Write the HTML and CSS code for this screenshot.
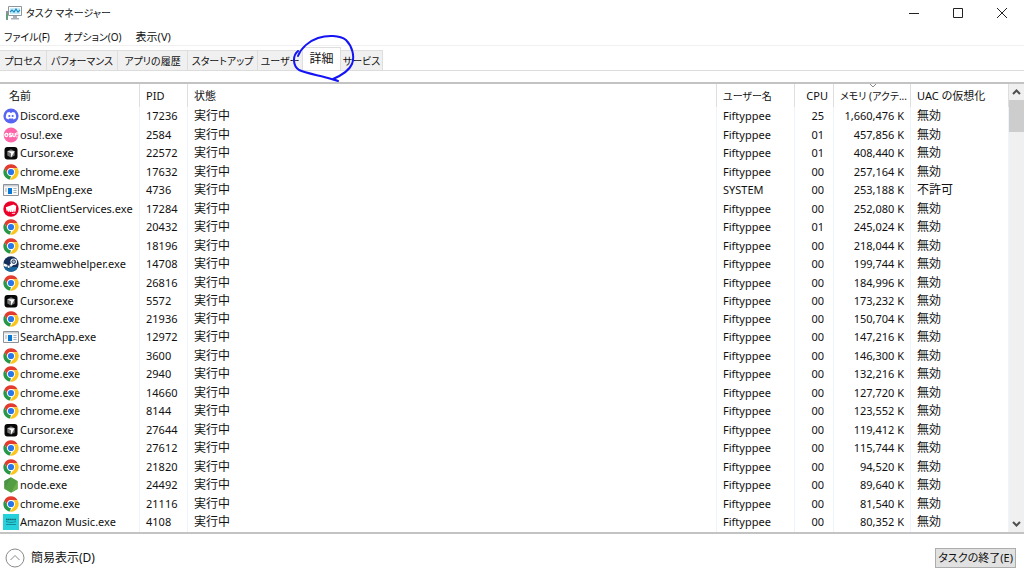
FILE: index.html
```html
<!DOCTYPE html>
<html lang="ja">
<head>
<meta charset="utf-8">
<title>タスク マネージャー</title>
<link rel="stylesheet" href="styles.css">
</head>
<body>
<svg class="defs" aria-hidden="true">
  <symbol id="discord" viewBox="0 0 16 16"><circle cx="8" cy="8" r="7.6" fill="#5865f2"/><path d="M4.300 4.600 6.600 4 7 4.800h2L9.400 4l2.300.6c1.100 1.600 1.600 3.400 1.400 5.500-.7.7-1.500 1.100-2.500 1.400l-.6-1.100H6l-.6 1.100c-1-.3-1.800-.7-2.500-1.400-.2-2.100.3-3.900 1.400-5.500z" fill="#fff"/><circle cx="6.300" cy="8" r="1.100" fill="#5865f2"/><circle cx="9.700" cy="8" r="1.100" fill="#5865f2"/></symbol>
  <symbol id="osu" viewBox="0 0 16 16"><circle cx="8" cy="8" r="7.400" fill="#ff66aa"/><g fill="none" stroke="#fff" stroke-width="1.300"><circle cx="3.400" cy="8" r="1.500"/><path d="M8.500 6.400H7.100c-1 0-1 1.500 0 1.600h.6c1.100 0 1.100 1.700 0 1.700H6.100M9.800 6v2.300c0 1.800 2.500 1.800 2.500 0V6M14 5v3.300M14 9.200v1.200"/></g></symbol>
  <symbol id="cursor" viewBox="0 0 16 16"><rect x="1.500" y="2" width="13" height="12.500" rx="3" fill="#080808"/><path d="m8 4.200 3.700 2v4.200L8 12.500l-3.700-2.100V6.200z" fill="#777"/><path d="M4.300 6.200h7.400L8 12.500V8.300z" fill="#fff"/></symbol>
  <symbol id="chrome" viewBox="0 0 16 16"><circle cx="8" cy="8" r="7.600" fill="#fff"/><path d="M1.400 4.200A7.600 7.600 0 0 1 14.600 4.200H8A3.800 3.800 0 0 0 4.700 9.900z" fill="#e33b2e"/><path d="M1.400 4.200 4.700 9.900A3.800 3.800 0 0 0 8 11.800l-.9 3.800A7.600 7.600 0 0 1 1.400 4.200z" fill="#279847"/><path d="M14.600 4.200A7.600 7.600 0 0 1 7.100 15.600l4.200-5.700A3.800 3.800 0 0 0 8 4.200z" fill="#fcc51c"/><circle cx="8" cy="8" r="3.900" fill="#fff"/><circle cx="8" cy="8" r="3.100" fill="#2878eb"/></symbol>
  <symbol id="window" viewBox="0 0 16 16"><path d="M.5 2.500h15v11H.5z" fill="#f8f8f8" stroke="#8b9298"/><path d="M1 3h14v1.500H1z" fill="#c8cdd1"/><path d="M5 6h4v6H5z" fill="#0878d4"/><path d="M2 7h2M2 9h2M10.500 6.500h3M10.500 8.500h3M10.500 10.500h3" stroke="#a2b2bd"/></symbol>
  <symbol id="riot" viewBox="0 0 16 16"><circle cx="8" cy="8" r="7.700" fill="#eb0029"/><path d="m2.800 6.300 7.700-2.800 2.700 1.500-.5 5.500-1.600.2V8.200l-.6 2.700H9.100l-.3-2.300-.2 2.300H7.100l-.5-2.100v2H5L4.400 8.600v2L3.600 10z" fill="#fff"/><path d="m8.500 12 3.700-.2-.2 1-2.700-.1z" fill="#fff"/></symbol>
  <symbol id="steam" viewBox="0 0 16 16"><circle cx="8" cy="8" r="7.700" fill="#142e59"/><path d="M1 11.300A7.700 7.700 0 0 0 15 11z" fill="#1666a0"/><path d="M.4 7.300 6 9.600l3-3.400 2 2.400-4.600 3.700L.6 10z" fill="#fff"/><circle cx="10.700" cy="5.700" r="2.700" fill="#a9b6c6" stroke="#fff" stroke-width="1.200"/><circle cx="10.700" cy="5.700" r="1.800" fill="none" stroke="#142e59" stroke-width=".8"/><circle cx="5.600" cy="10.900" r="1.600" fill="none" stroke="#142e59" stroke-width=".7"/></symbol>
  <symbol id="node" viewBox="0 0 16 16"><path d="m8 .3 6.600 3.800v7.800L8 15.700 1.400 11.900V4.100z" fill="#539e43"/><path d="M8 .3 1.400 4.100v7.800z" fill="#4b9146"/><path d="m14.600 4.100v7.800L8 15.700z" fill="#6cb04e"/></symbol>
  <symbol id="amazon" viewBox="0 0 16 16"><path d="M0 0h16v16H0z" fill="#25d1da"/><path d="M3 5.500h10" stroke="#176874" stroke-width="1.600" stroke-dasharray="1.500 .3"/><path d="M3 7.500c3 1.200 7 1.200 10 0M3 10.500h10" fill="none" stroke="#168c98"/></symbol>
</svg>
<header class="titlebar">
  <svg class="app-icon" viewBox="0 0 17 16" aria-hidden="true"><path d="M1 6h2v9H1z" fill="#8b9297"/><path d="M1.500 9h1v5h-1z" fill="#3bae55"/><path d="M3.500 1.500h13v9h-13z" fill="#fff" stroke="#8c969c"/><path d="M5 3h10v6H5z" fill="#c5ebfa"/><path d="m5 7 2-2 2 2 2-3 2 3 2-2" fill="none" stroke="#198bc4" stroke-width="1.200"/><path d="M8 11h4v2h2v1.500H6V13h2z" fill="#a7afb4"/></svg>
  <h1>タスク マネージャー</h1>
  <div class="window-buttons">
    <button aria-label="最小化"><svg viewBox="0 0 12 12"><path d="M1 6.500h10"/></svg></button>
    <button aria-label="最大化"><svg viewBox="0 0 12 12"><path d="M1.500 1.500h9v9h-9z"/></svg></button>
    <button aria-label="閉じる"><svg viewBox="0 0 12 12"><path d="m1 1 10 10M11 1 1 11"/></svg></button>
  </div>
</header>
<nav class="menu"><button>ファイル(F)</button><button>オプション(O)</button><button class="kanji">表示(V)</button></nav>
<div class="tabs" role="tablist">
  <button role="tab">プロセス</button><button role="tab">パフォーマンス</button><button role="tab">アプリの履歴</button><button role="tab">スタートアップ</button><button role="tab">ユーザー</button><button role="tab" class="selected kanji" aria-selected="true">詳細</button><button role="tab">サービス</button>
  <svg class="scribble" viewBox="0 0 64 50" aria-hidden="true"><path d="M6 24C9 16 17 9 26 6C35 3 48 3 54 8C60 14 63 24 60 32C57 39 48 44 41 47L46 49L36 46C25 43 13 41 7 38C1 34 0 24 6 19"/></svg>
</div>
<main class="panel">
  <div class="list">
    <table>
      <colgroup><col class="c-name"><col class="c-pid"><col><col class="c-user"><col class="c-cpu"><col class="c-mem"><col class="c-uac"></colgroup>
      <thead><tr><th>名前</th><th>PID</th><th>状態</th><th class="kana">ユーザー名</th><th class="num">CPU</th><th class="sorted kana"><svg viewBox="0 0 8 4" aria-hidden="true"><path d="m1 0 3 3 3-3"/></svg>メモリ (アクテ...</th><th>UAC の仮想化</th></tr></thead>
      <tbody>
        <tr><td><svg><use href="#discord"/></svg>Discord.exe</td><td>17236</td><td>実行中</td><td>Fiftyppee</td><td>25</td><td>1,660,476 K</td><td>無効</td></tr>
        <tr><td><svg><use href="#osu"/></svg>osu!.exe</td><td>2584</td><td>実行中</td><td>Fiftyppee</td><td>01</td><td>457,856 K</td><td>無効</td></tr>
        <tr><td><svg><use href="#cursor"/></svg>Cursor.exe</td><td>22572</td><td>実行中</td><td>Fiftyppee</td><td>01</td><td>408,440 K</td><td>無効</td></tr>
        <tr><td><svg><use href="#chrome"/></svg>chrome.exe</td><td>17632</td><td>実行中</td><td>Fiftyppee</td><td>00</td><td>257,164 K</td><td>無効</td></tr>
        <tr><td><svg><use href="#window"/></svg>MsMpEng.exe</td><td>4736</td><td>実行中</td><td>SYSTEM</td><td>00</td><td>253,188 K</td><td>不許可</td></tr>
        <tr><td><svg><use href="#riot"/></svg>RiotClientServices.exe</td><td>17284</td><td>実行中</td><td>Fiftyppee</td><td>00</td><td>252,080 K</td><td>無効</td></tr>
        <tr><td><svg><use href="#chrome"/></svg>chrome.exe</td><td>20432</td><td>実行中</td><td>Fiftyppee</td><td>01</td><td>245,024 K</td><td>無効</td></tr>
        <tr><td><svg><use href="#chrome"/></svg>chrome.exe</td><td>18196</td><td>実行中</td><td>Fiftyppee</td><td>00</td><td>218,044 K</td><td>無効</td></tr>
        <tr><td><svg><use href="#steam"/></svg>steamwebhelper.exe</td><td>14708</td><td>実行中</td><td>Fiftyppee</td><td>00</td><td>199,744 K</td><td>無効</td></tr>
        <tr><td><svg><use href="#chrome"/></svg>chrome.exe</td><td>26816</td><td>実行中</td><td>Fiftyppee</td><td>00</td><td>184,996 K</td><td>無効</td></tr>
        <tr><td><svg><use href="#cursor"/></svg>Cursor.exe</td><td>5572</td><td>実行中</td><td>Fiftyppee</td><td>00</td><td>173,232 K</td><td>無効</td></tr>
        <tr><td><svg><use href="#chrome"/></svg>chrome.exe</td><td>21936</td><td>実行中</td><td>Fiftyppee</td><td>00</td><td>150,704 K</td><td>無効</td></tr>
        <tr><td><svg><use href="#window"/></svg>SearchApp.exe</td><td>12972</td><td>実行中</td><td>Fiftyppee</td><td>00</td><td>147,216 K</td><td>無効</td></tr>
        <tr><td><svg><use href="#chrome"/></svg>chrome.exe</td><td>3600</td><td>実行中</td><td>Fiftyppee</td><td>00</td><td>146,300 K</td><td>無効</td></tr>
        <tr><td><svg><use href="#chrome"/></svg>chrome.exe</td><td>2940</td><td>実行中</td><td>Fiftyppee</td><td>00</td><td>132,216 K</td><td>無効</td></tr>
        <tr><td><svg><use href="#chrome"/></svg>chrome.exe</td><td>14660</td><td>実行中</td><td>Fiftyppee</td><td>00</td><td>127,720 K</td><td>無効</td></tr>
        <tr><td><svg><use href="#chrome"/></svg>chrome.exe</td><td>8144</td><td>実行中</td><td>Fiftyppee</td><td>00</td><td>123,552 K</td><td>無効</td></tr>
        <tr><td><svg><use href="#cursor"/></svg>Cursor.exe</td><td>27644</td><td>実行中</td><td>Fiftyppee</td><td>00</td><td>119,412 K</td><td>無効</td></tr>
        <tr><td><svg><use href="#chrome"/></svg>chrome.exe</td><td>27612</td><td>実行中</td><td>Fiftyppee</td><td>00</td><td>115,744 K</td><td>無効</td></tr>
        <tr><td><svg><use href="#chrome"/></svg>chrome.exe</td><td>21820</td><td>実行中</td><td>Fiftyppee</td><td>00</td><td>94,520 K</td><td>無効</td></tr>
        <tr><td><svg><use href="#node"/></svg>node.exe</td><td>24492</td><td>実行中</td><td>Fiftyppee</td><td>00</td><td>89,640 K</td><td>無効</td></tr>
        <tr><td><svg><use href="#chrome"/></svg>chrome.exe</td><td>21116</td><td>実行中</td><td>Fiftyppee</td><td>00</td><td>81,540 K</td><td>無効</td></tr>
        <tr><td><svg><use href="#amazon"/></svg>Amazon Music.exe</td><td>4108</td><td>実行中</td><td>Fiftyppee</td><td>00</td><td>80,352 K</td><td>無効</td></tr>
        <tr><td><svg><use href="#chrome"/></svg></td><td></td><td></td><td></td><td></td><td></td><td></td></tr>
      </tbody>
    </table>
  </div>
  <div class="scrollbar">
    <button aria-label="上へ"><svg viewBox="0 0 9 6"><path d="m1 5 3.500-3.500L8 5"/></svg></button>
    <div class="track"><div class="thumb"></div></div>
    <button aria-label="下へ"><svg viewBox="0 0 9 6"><path d="m1 1 3.500 3.500L8 1"/></svg></button>
  </div>
</main>
<footer class="footer">
  <button class="fewer"><svg viewBox="0 0 20 20" aria-hidden="true"><circle cx="10" cy="10" r="9"/><path d="m5.500 12 4.500-4.500 4.500 4.500"/></svg>簡易表示(D)</button>
  <button class="end">タスクの終了(E)</button>
</footer>
</body>
</html>
```
FILE: styles.css
```css
* { box-sizing: border-box; }
body {
  margin: 0;
  height: 100vh;
  display: flex;
  flex-direction: column;
  overflow: hidden;
  background: #fff;
  color: #111;
  font: 12px/16px "Noto Sans", "Noto Sans CJK JP", sans-serif;
  font-feature-settings: "palt";
}
button {
  margin: 0;
  padding: 0;
  border: 0;
  background: none;
  color: inherit;
  font: inherit;
  font-feature-settings: inherit;
  white-space: nowrap;
}
.defs { position: absolute; width: 0; height: 0; }
.titlebar { display: flex; align-items: center; height: 25px; padding-left: 5px; }
.app-icon { width: 17px; height: 16px; margin-right: 4px; }
h1 { margin: 0; font-size: 10px; font-weight: 400; }
.window-buttons { display: flex; margin-left: auto; }
.window-buttons button { width: 44px; height: 24px; }
.window-buttons svg { width: 12px; height: 12px; display: block; margin: auto; fill: none; stroke: #222; }
.menu { display: flex; gap: 14px; height: 21px; padding: 3px 4px 0; border-bottom: 1px solid #f0f0f0; font-size: 10px; }
.menu .kanji { font-size: 11px; }
.tabs {
  position: relative;
  display: grid;
  grid-template-columns: 47px 71px 70px 70px 45px 38px 42px;
  align-items: end;
  height: 25px;
  border-bottom: 1px solid #dcdcdc;
  font-size: 10px;
}
.tabs button { height: 20px; background: #f0f0f0; border: 1px solid #dedede; border-width: 1px 1px 0 0; }
.tabs .selected { height: 23px; background: #fff; font-size: 12px; }
.scribble { position: absolute; left: 292px; top: -14px; width: 64px; height: 50px; fill: none; stroke: #1414f5; stroke-width: 2; stroke-linecap: round; stroke-linejoin: round; }
.panel { flex: 1; min-height: 0; display: flex; margin-top: 11px; border: solid #c3c3c3; border-width: 2px 0; }
.list { flex: 1; min-width: 0; overflow: hidden; }
table { width: 100%; border-collapse: separate; border-spacing: 0; table-layout: fixed; }
.c-name { width: 140px; }
.c-pid { width: 48px; }
.c-user { width: 78px; }
.c-cpu { width: 39px; }
.c-mem { width: 77px; }
.c-uac { width: 98px; }
th, td { padding: 0 6px; border-right: 1px solid #edf4fb; text-align: left; font-weight: 400; font-size: 11px; white-space: nowrap; }
th { height: 23px; border-right-color: #dedede; }
th:first-child { padding-left: 9px; }
th.kana { font-size: 10px; }
td { height: 18px; line-height: 16px; }
tr:nth-child(even) td { height: 19px; }
tr:nth-child(12) td { height: 18px; }
td:first-child { padding: 0 0 0 3px; }
td:nth-child(3), td:nth-child(7) { font-size: 12px; }
td svg { width: 16px; height: 16px; margin-right: 1px; vertical-align: top; }
th.num { text-align: right; padding-right: 5px; }
td:nth-child(5), td:nth-child(6) { text-align: right; }
td:nth-child(5) { padding-right: 9px; }
.sorted { position: relative; }
.sorted svg { position: absolute; left: 35px; top: 0; width: 8px; height: 4px; fill: none; stroke: #888; }
.scrollbar { display: flex; flex-direction: column; width: 15px; background: #f0f0f0; }
.scrollbar button { height: 16px; }
.scrollbar svg { display: block; width: 9px; height: 6px; margin: auto; fill: none; stroke: #505050; stroke-width: 2; }
.track { flex: 1; }
.thumb { height: 32px; background: #cdcdcd; }
.footer { display: flex; align-items: center; justify-content: space-between; height: 47px; padding: 0 8px 0 5px; }
.fewer { display: flex; align-items: center; gap: 6px; }
.fewer svg { width: 20px; height: 20px; fill: none; stroke: #8a8a8a; }
.end { height: 20px; padding: 0 2px; background: #e1e1e1; border: 1px solid #adadad; font-size: 11px; }
```
